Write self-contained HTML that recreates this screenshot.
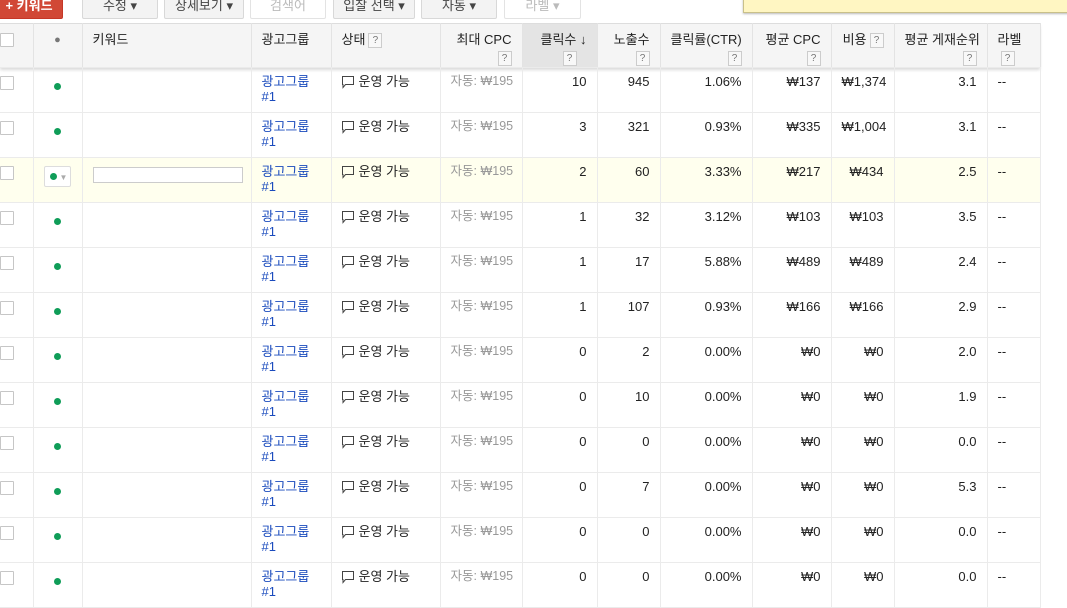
<!DOCTYPE html>
<html><head><meta charset="utf-8"><style>
body{margin:0;width:1067px;height:581px;overflow:hidden;background:#fff;font-family:"Liberation Sans","Noto Sans CJK KR",sans-serif;font-size:13px;color:#222;position:relative}
.btn{position:absolute;top:-8px;height:27px;border:1px solid #d8d8d8;border-radius:2px;background:#f3f3f3;color:#444;font-size:13px;text-align:center;line-height:25px;box-sizing:border-box}
.btn.dis{background:#fff;color:#bbb;border-color:#e3e3e3}
.red{background:#d14836;border-color:#c53727;color:#fff;left:-5px;width:68px;font-weight:bold}
.ban{position:absolute;left:743px;top:-2px;width:340px;height:13px;background:#fff6c2;border:1px solid #c9c08a;box-shadow:0 1px 2px #bbb}
table{position:absolute;left:0;top:23px;border-collapse:collapse;table-layout:fixed;width:1040px}
td,th{border-right:1px solid #ebebeb;border-bottom:1px solid #ebebeb;vertical-align:top;padding:6px 10px 0 10px;box-sizing:border-box;overflow:hidden;white-space:nowrap}
th{height:44px;background:#f5f5f5;font-weight:normal;color:#222;text-align:left;border-top:1px solid #ddd;padding-top:7px;border-right:1px solid #e3e3e3;line-height:18px}
thead tr{box-shadow:0 2px 3px rgba(0,0,0,.15)}
td{height:45px;padding-top:6px;line-height:15px}
.r{text-align:right}
th.r{text-align:right}
.q{display:inline-block;width:12px;height:13px;border:1px solid #ccc;background:#f8f8f8;color:#777;font-size:10px;line-height:13px;text-align:center;vertical-align:middle;margin-left:3px}
.cb{display:inline-block;width:12px;height:12px;border:1px solid #c6c6c6;border-radius:1px;background:#fff;margin-left:-10px;margin-top:2px}
.dot{display:block;width:7px;height:7px;border-radius:50%;background:#0f9d58;margin:9px auto 0}
a{color:#1a4bbd;text-decoration:none}
.g{color:#999;font-size:12.5px}
.bub{display:inline-block;width:12px;height:14px;margin-right:5px;vertical-align:-3px}
tr.hl td{background:#ffffee}
</style></head><body>
<div class="btn red">+ 키워드</div>
<div class="btn" style="left:82px;width:76px">수정 ▾</div>
<div class="btn" style="left:164px;width:80px">상세보기 ▾</div>
<div class="btn dis" style="left:250px;width:76px">검색어</div>
<div class="btn" style="left:333px;width:82px">입찰 선택 ▾</div>
<div class="btn" style="left:421px;width:76px">자동 ▾</div>
<div class="btn dis" style="left:504px;width:77px">라벨 ▾</div>
<div class="ban"></div>
<svg width="0" height="0" style="position:absolute"><defs><symbol id="b" viewBox="0 0 12 14"><path d="M0.5 1.5h11v8h-8l-2.5 3v-3h-0.5z" fill="none" stroke="#444"/></symbol></defs></svg>
<table>
<colgroup><col style="width:33px"><col style="width:49px"><col style="width:169px"><col style="width:80px"><col style="width:109px"><col style="width:82px"><col style="width:75px"><col style="width:63px"><col style="width:92px"><col style="width:79px"><col style="width:63px"><col style="width:93px"><col style="width:53px"></colgroup>
<thead><tr>
<th><span class="cb"></span></th><th style="text-align:center;color:#777;font-size:11px">●</th><th>키워드</th><th>광고그룹</th><th>상태<span class="q">?</span></th>
<th class="r">최대 CPC<br><span class="q">?</span></th>
<th class="r" style="background:#e4e4e4">클릭수 ↓<br><span class="q" style="margin-right:10px">?</span></th>
<th class="r">노출수<br><span class="q">?</span></th>
<th class="r">클릭률(CTR)<br><span class="q">?</span></th>
<th class="r">평균 CPC<br><span class="q">?</span></th>
<th class="r">비용<span class="q">?</span></th>
<th class="r">평균 게재순위<br><span class="q">?</span></th>
<th>라벨<br><span class="q">?</span></th>
</tr></thead>
<tbody>
<tr><td><span class="cb"></span></td><td><span class="dot"></span></td><td></td><td><a>광고그룹<br>#1</a></td><td><svg class="bub"><use href="#b"/></svg>운영 가능</td><td class="r g">자동: ₩195</td><td class="r">10</td><td class="r">945</td><td class="r">1.06%</td><td class="r">₩137</td><td class="r">₩1,374</td><td class="r">3.1</td><td>--</td></tr>
<tr><td><span class="cb"></span></td><td><span class="dot"></span></td><td></td><td><a>광고그룹<br>#1</a></td><td><svg class="bub"><use href="#b"/></svg>운영 가능</td><td class="r g">자동: ₩195</td><td class="r">3</td><td class="r">321</td><td class="r">0.93%</td><td class="r">₩335</td><td class="r">₩1,004</td><td class="r">3.1</td><td>--</td></tr>
<tr class="hl"><td><span class="cb"></span></td><td><span style="display:inline-block;width:25px;height:19px;border:1px solid #ddd;border-radius:2px;background:#fff;margin-left:0;margin-top:2px;position:relative"><span style="position:absolute;left:5px;top:6px;width:7px;height:7px;border-radius:50%;background:#0f9d58"></span><span style="position:absolute;left:15px;top:3px;color:#aaa;font-size:8px">▼</span></span></td><td><span style="display:block;width:148px;height:14px;border:1px solid #ccc;background:#fff;margin-top:3px"></span></td><td><a>광고그룹<br>#1</a></td><td><svg class="bub"><use href="#b"/></svg>운영 가능</td><td class="r g">자동: ₩195</td><td class="r">2</td><td class="r">60</td><td class="r">3.33%</td><td class="r">₩217</td><td class="r">₩434</td><td class="r">2.5</td><td>--</td></tr>
<tr><td><span class="cb"></span></td><td><span class="dot"></span></td><td></td><td><a>광고그룹<br>#1</a></td><td><svg class="bub"><use href="#b"/></svg>운영 가능</td><td class="r g">자동: ₩195</td><td class="r">1</td><td class="r">32</td><td class="r">3.12%</td><td class="r">₩103</td><td class="r">₩103</td><td class="r">3.5</td><td>--</td></tr>
<tr><td><span class="cb"></span></td><td><span class="dot"></span></td><td></td><td><a>광고그룹<br>#1</a></td><td><svg class="bub"><use href="#b"/></svg>운영 가능</td><td class="r g">자동: ₩195</td><td class="r">1</td><td class="r">17</td><td class="r">5.88%</td><td class="r">₩489</td><td class="r">₩489</td><td class="r">2.4</td><td>--</td></tr>
<tr><td><span class="cb"></span></td><td><span class="dot"></span></td><td></td><td><a>광고그룹<br>#1</a></td><td><svg class="bub"><use href="#b"/></svg>운영 가능</td><td class="r g">자동: ₩195</td><td class="r">1</td><td class="r">107</td><td class="r">0.93%</td><td class="r">₩166</td><td class="r">₩166</td><td class="r">2.9</td><td>--</td></tr>
<tr><td><span class="cb"></span></td><td><span class="dot"></span></td><td></td><td><a>광고그룹<br>#1</a></td><td><svg class="bub"><use href="#b"/></svg>운영 가능</td><td class="r g">자동: ₩195</td><td class="r">0</td><td class="r">2</td><td class="r">0.00%</td><td class="r">₩0</td><td class="r">₩0</td><td class="r">2.0</td><td>--</td></tr>
<tr><td><span class="cb"></span></td><td><span class="dot"></span></td><td></td><td><a>광고그룹<br>#1</a></td><td><svg class="bub"><use href="#b"/></svg>운영 가능</td><td class="r g">자동: ₩195</td><td class="r">0</td><td class="r">10</td><td class="r">0.00%</td><td class="r">₩0</td><td class="r">₩0</td><td class="r">1.9</td><td>--</td></tr>
<tr><td><span class="cb"></span></td><td><span class="dot"></span></td><td></td><td><a>광고그룹<br>#1</a></td><td><svg class="bub"><use href="#b"/></svg>운영 가능</td><td class="r g">자동: ₩195</td><td class="r">0</td><td class="r">0</td><td class="r">0.00%</td><td class="r">₩0</td><td class="r">₩0</td><td class="r">0.0</td><td>--</td></tr>
<tr><td><span class="cb"></span></td><td><span class="dot"></span></td><td></td><td><a>광고그룹<br>#1</a></td><td><svg class="bub"><use href="#b"/></svg>운영 가능</td><td class="r g">자동: ₩195</td><td class="r">0</td><td class="r">7</td><td class="r">0.00%</td><td class="r">₩0</td><td class="r">₩0</td><td class="r">5.3</td><td>--</td></tr>
<tr><td><span class="cb"></span></td><td><span class="dot"></span></td><td></td><td><a>광고그룹<br>#1</a></td><td><svg class="bub"><use href="#b"/></svg>운영 가능</td><td class="r g">자동: ₩195</td><td class="r">0</td><td class="r">0</td><td class="r">0.00%</td><td class="r">₩0</td><td class="r">₩0</td><td class="r">0.0</td><td>--</td></tr>
<tr><td><span class="cb"></span></td><td><span class="dot"></span></td><td></td><td><a>광고그룹<br>#1</a></td><td><svg class="bub"><use href="#b"/></svg>운영 가능</td><td class="r g">자동: ₩195</td><td class="r">0</td><td class="r">0</td><td class="r">0.00%</td><td class="r">₩0</td><td class="r">₩0</td><td class="r">0.0</td><td>--</td></tr>
</tbody></table>
</body></html>
